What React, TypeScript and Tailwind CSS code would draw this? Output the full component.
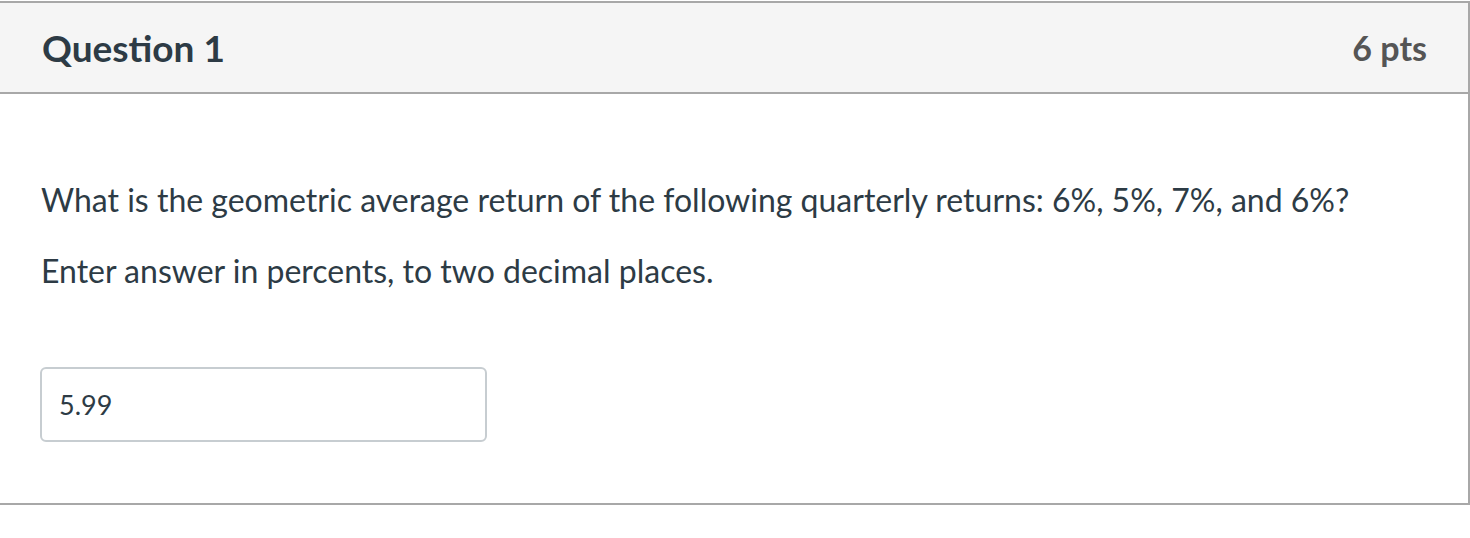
import React from "react";

export default function App() {
  return (
    <div className="w-[1470px] h-[538px] bg-white" style={{ fontFamily: "Lato, 'Noto Sans', sans-serif" }}>
      <div className="mt-px w-[1470px] border-t-2 border-r-2 border-b-2 border-[#a8a8a8]">
        <div className="h-[91px] bg-[#f5f5f5] border-b-2 border-[#a8a8a8] flex items-center justify-between pl-[42px] pr-[41px]">
          <div className="text-[37px] font-bold text-[#2d3b45] leading-none">Question 1</div>
          <div className="text-[34px] font-bold text-[#555555] leading-none">6 pts</div>
        </div>
        <div className="h-[409px] pl-[41px] pt-[86px]">
          <p className="text-[32px] leading-[40px] text-[#2d3b45]">
            What is the geometric average return of the following quarterly returns: 6%, 5%, 7%, and 6%?
          </p>
          <p className="mt-[31px] text-[32px] leading-[40px] text-[#2d3b45]">
            Enter answer in percents, to two decimal places.
          </p>
          <div className="mt-[76px] -ml-px w-[447px] h-[75px] border-2 border-[#c7cdd1] rounded-[6px] flex items-center pl-[17px]">
            <span className="text-[27px] text-[#2d3b45] leading-none">5.99</span>
          </div>
        </div>
      </div>
    </div>
  );
}
